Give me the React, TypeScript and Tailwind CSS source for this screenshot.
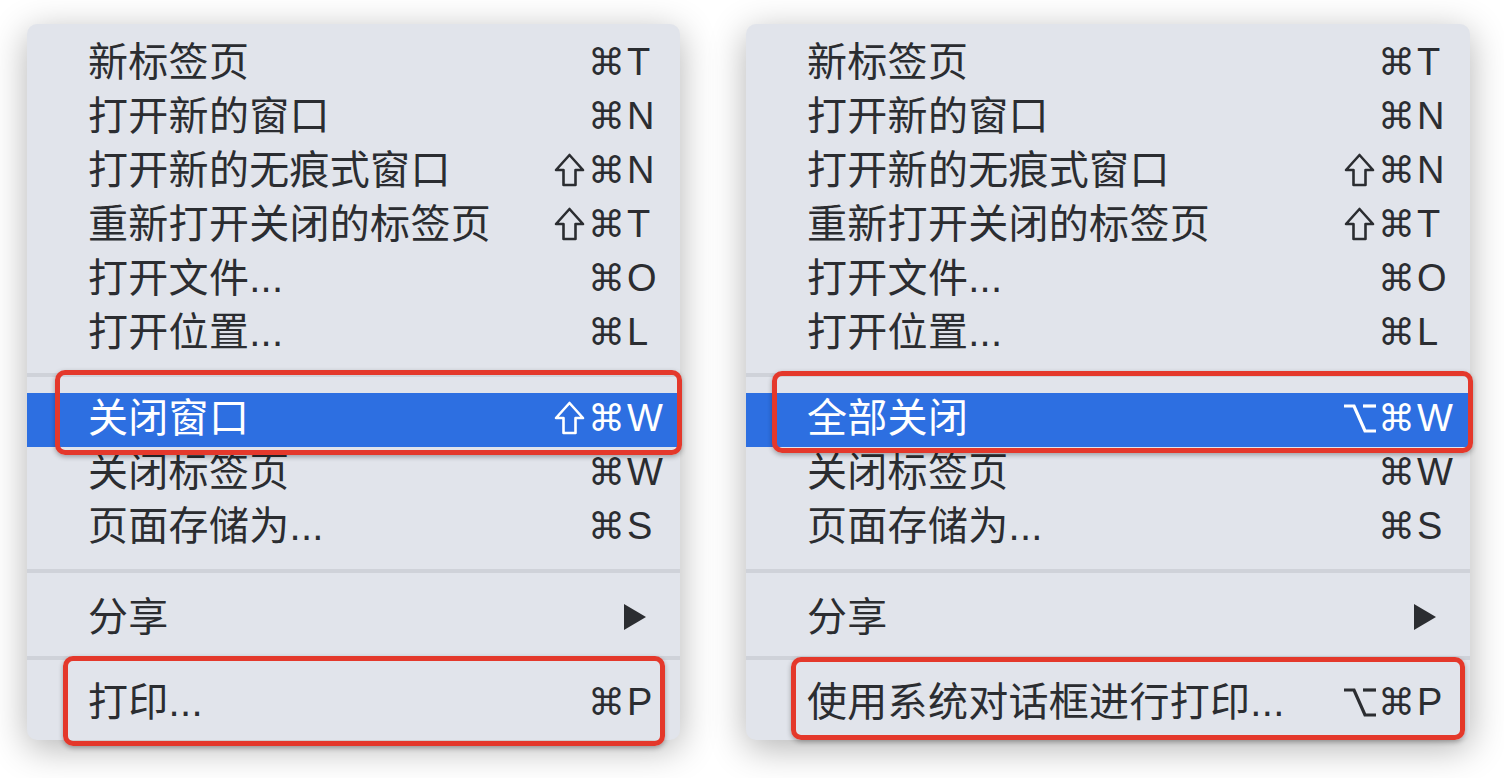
import React from "react";

type Item =
  | { kind: "row"; label: string; mods?: string[]; keyChar?: string; active?: boolean; submenu?: boolean }
  | { kind: "sep"; top: number; bottom: number };

const LEFT_MENU: Item[] = [
  { kind: "row", label: "新标签页", mods: ["cmd"], keyChar: "T" },
  { kind: "row", label: "打开新的窗口", mods: ["cmd"], keyChar: "N" },
  { kind: "row", label: "打开新的无痕式窗口", mods: ["shift", "cmd"], keyChar: "N" },
  { kind: "row", label: "重新打开关闭的标签页", mods: ["shift", "cmd"], keyChar: "T" },
  { kind: "row", label: "打开文件...", mods: ["cmd"], keyChar: "O" },
  { kind: "row", label: "打开位置...", mods: ["cmd"], keyChar: "L" },
  { kind: "sep", top: 12, bottom: 16 },
  { kind: "row", label: "关闭窗口", mods: ["shift", "cmd"], keyChar: "W", active: true },
  { kind: "row", label: "关闭标签页", mods: ["cmd"], keyChar: "W" },
  { kind: "row", label: "页面存储为...", mods: ["cmd"], keyChar: "S" },
  { kind: "sep", top: 14, bottom: 19 },
  { kind: "row", label: "分享", submenu: true },
  { kind: "sep", top: 10, bottom: 17 },
  { kind: "row", label: "打印...", mods: ["cmd"], keyChar: "P" },
];

const RIGHT_MENU: Item[] = LEFT_MENU.map((it) => {
  if (it.kind !== "row") return it;
  if (it.label === "关闭窗口") return { ...it, label: "全部关闭", mods: ["opt", "cmd"] };
  if (it.label === "打印...") return { ...it, label: "使用系统对话框进行打印...", mods: ["opt", "cmd"] };
  return it;
});

const FONT = "[font-family:'Liberation_Sans','DejaVu_Sans','Noto_Sans_CJK_SC',sans-serif]";

// modifier key glyphs
function Mod({ name }: { name: string }) {
  if (name === "shift")
    return (
      <svg width="37" height="38" viewBox="0 0 37 38" className="block">
        <path d="M18.5 4 L32 19 L24.5 19 L24.5 34 L12.5 34 L12.5 19 L5 19 Z" fill="none" stroke="currentColor" strokeWidth="2.6" strokeLinejoin="round" />
      </svg>
    );
  if (name === "opt")
    return (
      <svg width="37" height="38" viewBox="0 0 37 38" className="block">
        <path d="M3 7 H13 L24 32 H35" fill="none" stroke="currentColor" strokeWidth="3.2" />
        <path d="M22 7 H35" fill="none" stroke="currentColor" strokeWidth="3.2" />
      </svg>
    );
  return <span className="block w-[37px] text-center [font-family:'DejaVu_Sans',sans-serif] text-[37px] leading-none">⌘</span>;
}

function Row({ label, mods = [], keyChar, active, submenu }: { label: string; mods?: string[]; keyChar?: string; active?: boolean; submenu?: boolean }) {
  return (
    <div
      className={`flex h-[54px] items-center justify-between pl-[61px] pr-[18px] ${
        active ? "bg-[#2d6fe1] text-white" : "text-[#2b2d31]"
      }`}
    >
      <span className="-mt-[4px] text-[40px] leading-none tracking-[0.3px]">{label}</span>
      {submenu ? (
        <svg width="26" height="28" viewBox="0 0 26 28" className="mr-[14px] -mt-[4px]">
          <path d="M2 1 L24 14 L2 27 Z" fill="#2b2d31" />
        </svg>
      ) : (
        <span className="-mt-[4px] flex items-center text-[38px] leading-none">
          {mods.map((m, i) => (
            <span key={i} className="w-[37px] flex justify-center">
              <Mod name={m} />
            </span>
          ))}
          <span className="w-[37px] pl-[2px] text-left">{keyChar}</span>
        </span>
      )}
    </div>
  );
}

function Menu({ items, width, boxes }: { items: Item[]; width: string; boxes: React.ReactNode }) {
  return (
    <div className={`relative ${width} rounded-[10px] bg-[#e1e4eb] pt-[13px] pb-[9px] shadow-[0_8px_36px_rgba(0,0,0,0.3)]`}>
      {items.map((it, i) =>
        it.kind === "sep" ? (
          <div key={i} style={{ paddingTop: it.top, paddingBottom: it.bottom }}>
            <div className="h-[4px] bg-[#cfd2d9]" />
          </div>
        ) : (
          <Row key={i} {...it} />
        )
      )}
      {boxes}
    </div>
  );
}

function RedBox({ className }: { className: string }) {
  return (
    <div
      className={`absolute rounded-[10px] border-[5px] border-[#e4382b] shadow-[0_2px_5px_rgba(0,0,0,0.3)] ${className}`}
    />
  );
}

export default function App() {
  return (
    <div className={`h-[778px] w-[1504px] bg-white ${FONT}`}>
      <div className="flex items-start gap-[66px] pl-[27px] pt-[24px]">
        <Menu
          items={LEFT_MENU}
          width="w-[653px]"
          boxes={
            <>
              <RedBox className="left-[28px] top-[346px] h-[85px] w-[627px]" />
              <RedBox className="left-[36px] top-[632px] h-[90px] w-[602px]" />
            </>
          }
        />
        <Menu
          items={RIGHT_MENU}
          width="w-[724px]"
          boxes={
            <>
              <RedBox className="left-[26px] top-[347px] h-[82px] w-[701px]" />
              <RedBox className="left-[45px] top-[633px] h-[83px] w-[674px]" />
            </>
          }
        />
      </div>
    </div>
  );
}
